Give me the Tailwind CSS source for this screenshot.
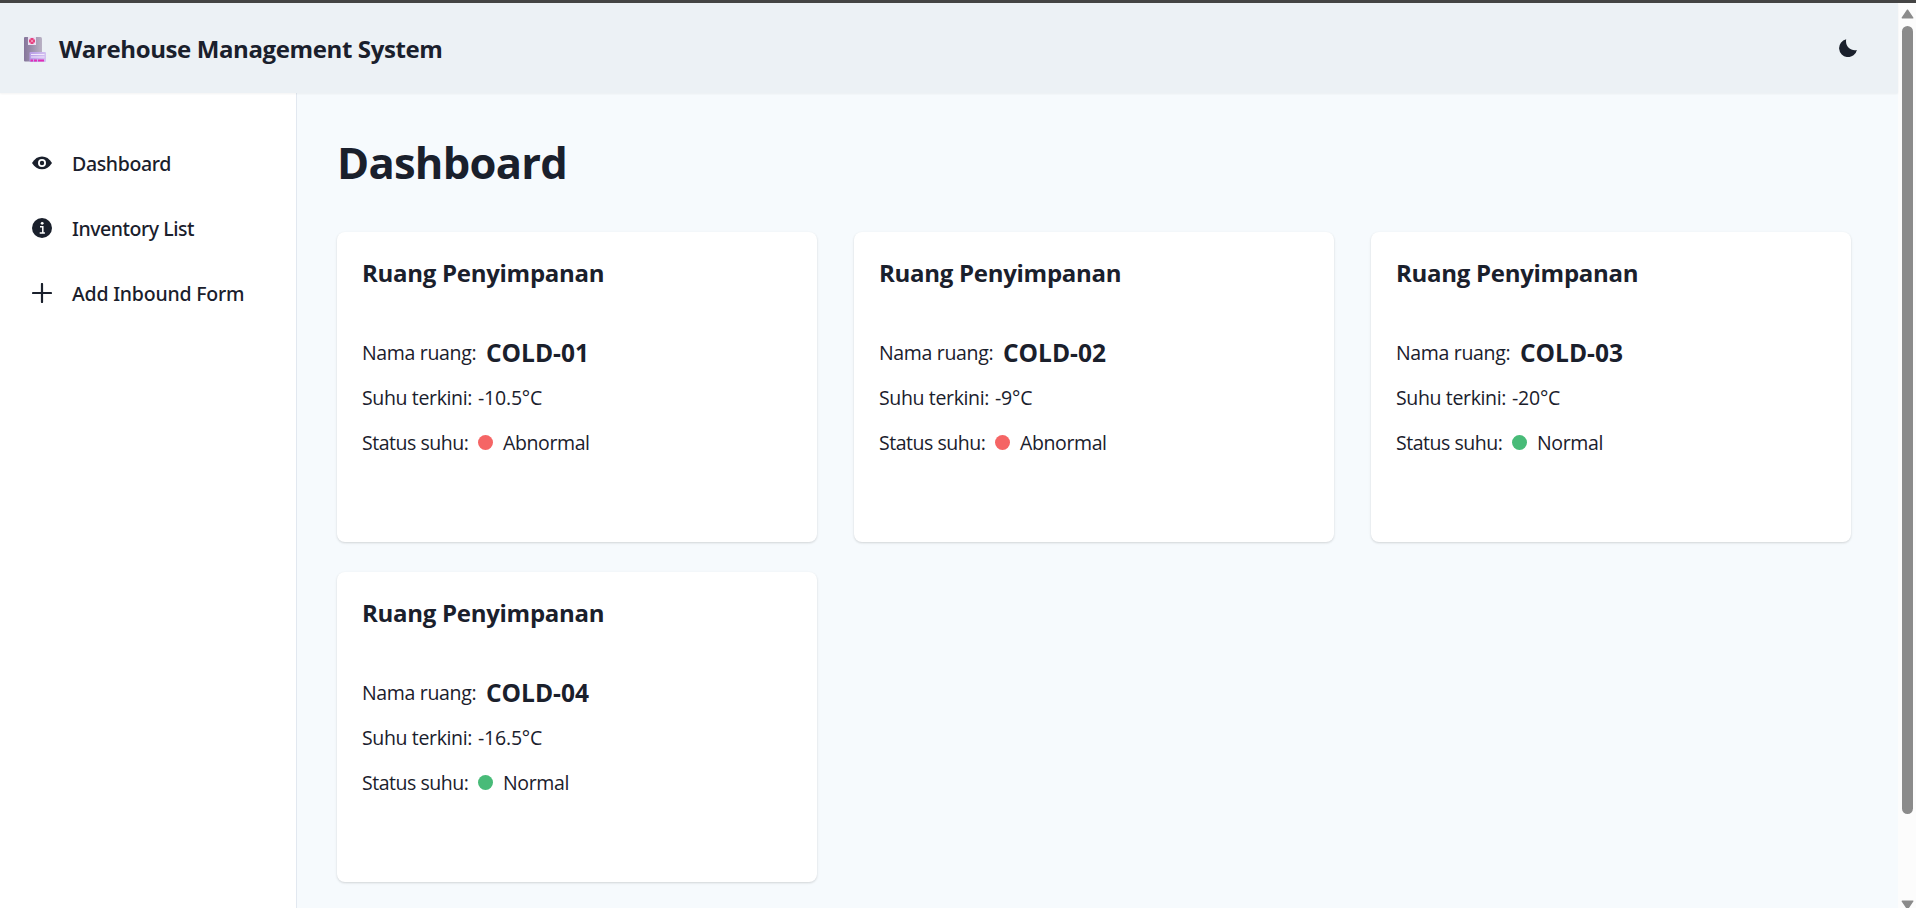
<!DOCTYPE html>
<html lang="id">
<head>
<meta charset="utf-8">
<title>Warehouse Management System</title>
<script src="https://cdn.jsdelivr.net/npm/@tailwindcss/browser@4"></script>
</head>
<body class="flex h-screen flex-col overflow-hidden bg-[#444444] pt-[3px] font-['Open_Sans',sans-serif] text-[19.5px] text-[#1a202c]">
<div class="flex min-h-0 flex-1">
  <div class="flex min-w-0 flex-1 flex-col bg-[#f6fafd]">
    <header class="z-10 flex h-[90px] shrink-0 items-center justify-between bg-[#ecf1f5] pr-[41px] pl-[24px] shadow-[0_1px_2px_rgba(0,0,0,0.05)]">
      <div class="flex items-center">
        <svg class="mt-[2px] h-[25px] w-[23px]" viewBox="0 0 23 25">
          <defs>
            <linearGradient id="body" x1="0" x2="1"><stop offset="0" stop-color="#85759a"/><stop offset="1" stop-color="#b9b1c4"/></linearGradient>
            <linearGradient id="label" x1="0" x2="1"><stop offset="0" stop-color="#b79be6"/><stop offset="1" stop-color="#d3c2f1"/></linearGradient>
          </defs>
          <path d="M1 0h15.500q1.500 0 1.500 1.500V24.500H1q-1 0-1-1V1q0-1 1-1z" fill="url(#body)"/>
          <rect x="4" y="0" width="8" height="8" fill="#eadff2"/>
          <path d="M6.500 1h3v1.500H11v3H9.500V7h-3V5.500H5v-3h1.500z" fill="#e6417f"/>
          <rect x="7.200" y="3.200" width="1.600" height="1.600" fill="#f3b4d2"/>
          <rect x="5.500" y="15" width="16.500" height="10" rx="1" fill="url(#label)"/>
          <path d="M7 17.500h13.500M7 20h13.500" stroke="#f1e9fc" stroke-width="1"/>
          <path d="M6.500 23.400h2.500M10 23.400h3M14 23.400h6" stroke="#e22cb6" stroke-width="2"/>
        </svg>
        <div class="ml-[12px] pt-[2px] text-[24px] font-bold tracking-[-0.38px] whitespace-nowrap">Warehouse Management System</div>
      </div>
      <svg class="h-[18px] w-[18px]" viewBox="0 0 18 18"><path d="M7.200 0.300A9 9 0 1 0 17.900 11C12.200 12.600 5.800 7.500 7.200 0.300z" fill="#1a202c"/></svg>
    </header>
    <div class="flex min-h-0 flex-1">
      <nav class="flex w-[297px] shrink-0 flex-col gap-[15px] border-r border-[#e2e8f0] bg-white pt-[45px] pl-[32px] font-['Noto_Sans','Open_Sans',sans-serif] font-medium">
        <a class="flex h-[50px] items-center gap-[20px]">
          <svg class="h-[20px] w-[20px]" viewBox="0 0 20 20"><path d="M0 10C2.600 5.600 6 3.500 10 3.500S17.400 5.600 20 10C17.400 14.300 14 16.300 10 16.300S2.600 14.300 0 10z" fill="#1a202c"/><circle cx="10" cy="10" r="3.100" fill="none" stroke="#fff" stroke-width="1.800"/></svg>
          <span class="pt-[2px] tracking-[-0.35px]">Dashboard</span>
        </a>
        <a class="flex h-[50px] items-center gap-[20px]">
          <svg class="h-[20px] w-[20px]" viewBox="0 0 20 20"><circle cx="10" cy="10" r="10" fill="#1a202c"/><circle cx="10.200" cy="5.300" r="1.400" fill="#fff"/><path d="M8 8.700h2.800v6M7.700 15h5.200" fill="none" stroke="#fff" stroke-width="1.500"/></svg>
          <span class="pt-[2px] tracking-[-0.46px]">Inventory List</span>
        </a>
        <a class="flex h-[50px] items-center gap-[20px]">
          <svg class="h-[20px] w-[20px]" viewBox="0 0 20 20"><path d="M10 1v18M1 10h18" stroke="#1a202c" stroke-width="2.200" stroke-linecap="round"/></svg>
          <span class="pt-[2px] tracking-[-0.22px]">Add Inbound Form</span>
        </a>
      </nav>
      <main class="min-w-0 flex-1 pt-[41px] pr-[47px] pl-[40px]">
        <h1 class="text-[43.5px] leading-[58px] font-bold tracking-[-0.75px]">Dashboard</h1>
        <div class="mt-[40px] grid grid-cols-3 gap-x-[37px] gap-y-[30px]">

          <section class="h-[310px] rounded-[8px] bg-white px-[25px] pt-[25px] shadow-[0_1px_3px_rgba(0,0,0,0.1),0_1px_2px_rgba(0,0,0,0.06)]">
            <h2 class="text-[24px] leading-[31px] font-bold tracking-[-0.28px]">Ruang Penyimpanan</h2>
            <div class="mt-[42px] leading-[45px]">
              <div class="flex"><span class="w-[124px] tracking-[-0.33px]">Nama ruang:</span><span class="text-[24.5px] font-bold">COLD-01</span></div>
              <div class="flex"><span class="w-[116px] tracking-[-0.36px]">Suhu terkini:</span><span class="tracking-[-0.2px]">-10.5°C</span></div>
              <div class="flex items-center"><span class="w-[116px] tracking-[-0.48px]">Status suhu:</span><i class="mr-[10px] h-[15px] w-[15px] rounded-full bg-[#f56565]"></i><span class="tracking-[-0.39px]">Abnormal</span></div>
            </div>
          </section>

          <section class="h-[310px] rounded-[8px] bg-white px-[25px] pt-[25px] shadow-[0_1px_3px_rgba(0,0,0,0.1),0_1px_2px_rgba(0,0,0,0.06)]">
            <h2 class="text-[24px] leading-[31px] font-bold tracking-[-0.28px]">Ruang Penyimpanan</h2>
            <div class="mt-[42px] leading-[45px]">
              <div class="flex"><span class="w-[124px] tracking-[-0.33px]">Nama ruang:</span><span class="text-[24.5px] font-bold">COLD-02</span></div>
              <div class="flex"><span class="w-[116px] tracking-[-0.36px]">Suhu terkini:</span><span class="tracking-[-0.2px]">-9°C</span></div>
              <div class="flex items-center"><span class="w-[116px] tracking-[-0.48px]">Status suhu:</span><i class="mr-[10px] h-[15px] w-[15px] rounded-full bg-[#f56565]"></i><span class="tracking-[-0.39px]">Abnormal</span></div>
            </div>
          </section>

          <section class="h-[310px] rounded-[8px] bg-white px-[25px] pt-[25px] shadow-[0_1px_3px_rgba(0,0,0,0.1),0_1px_2px_rgba(0,0,0,0.06)]">
            <h2 class="text-[24px] leading-[31px] font-bold tracking-[-0.28px]">Ruang Penyimpanan</h2>
            <div class="mt-[42px] leading-[45px]">
              <div class="flex"><span class="w-[124px] tracking-[-0.33px]">Nama ruang:</span><span class="text-[24.5px] font-bold">COLD-03</span></div>
              <div class="flex"><span class="w-[116px] tracking-[-0.36px]">Suhu terkini:</span><span class="tracking-[-0.2px]">-20°C</span></div>
              <div class="flex items-center"><span class="w-[116px] tracking-[-0.48px]">Status suhu:</span><i class="mr-[10px] h-[15px] w-[15px] rounded-full bg-[#48bb78]"></i><span class="tracking-[-0.35px]">Normal</span></div>
            </div>
          </section>

          <section class="h-[310px] rounded-[8px] bg-white px-[25px] pt-[25px] shadow-[0_1px_3px_rgba(0,0,0,0.1),0_1px_2px_rgba(0,0,0,0.06)]">
            <h2 class="text-[24px] leading-[31px] font-bold tracking-[-0.28px]">Ruang Penyimpanan</h2>
            <div class="mt-[42px] leading-[45px]">
              <div class="flex"><span class="w-[124px] tracking-[-0.33px]">Nama ruang:</span><span class="text-[24.5px] font-bold">COLD-04</span></div>
              <div class="flex"><span class="w-[116px] tracking-[-0.36px]">Suhu terkini:</span><span class="tracking-[-0.2px]">-16.5°C</span></div>
              <div class="flex items-center"><span class="w-[116px] tracking-[-0.48px]">Status suhu:</span><i class="mr-[10px] h-[15px] w-[15px] rounded-full bg-[#48bb78]"></i><span class="tracking-[-0.35px]">Normal</span></div>
            </div>
          </section>

        </div>
      </main>
    </div>
  </div>
  <!-- Scrollbar -->
  <div class="flex w-[18px] shrink-0 flex-col items-center bg-[#fcfcfc] pt-[6px] pr-px pl-[2px]">
    <svg class="h-[10px] w-[13px] shrink-0" viewBox="0 0 13 10"><path d="M6.500 1.200L11.700 8.800H1.300z" fill="#8b8b8b" stroke="#8b8b8b" stroke-width="1.500" stroke-linejoin="round"/></svg>
    <div class="mt-[7px] h-[788px] w-[11px] shrink-0 rounded-full bg-[#8b8b8b]"></div>
    <svg class="mt-[86px] h-[10px] w-[13px] shrink-0" viewBox="0 0 13 10"><path d="M6.500 8.800L11.700 1.200H1.300z" fill="#8b8b8b" stroke="#8b8b8b" stroke-width="1.500" stroke-linejoin="round"/></svg>
  </div>
</div>
</body>
</html>
